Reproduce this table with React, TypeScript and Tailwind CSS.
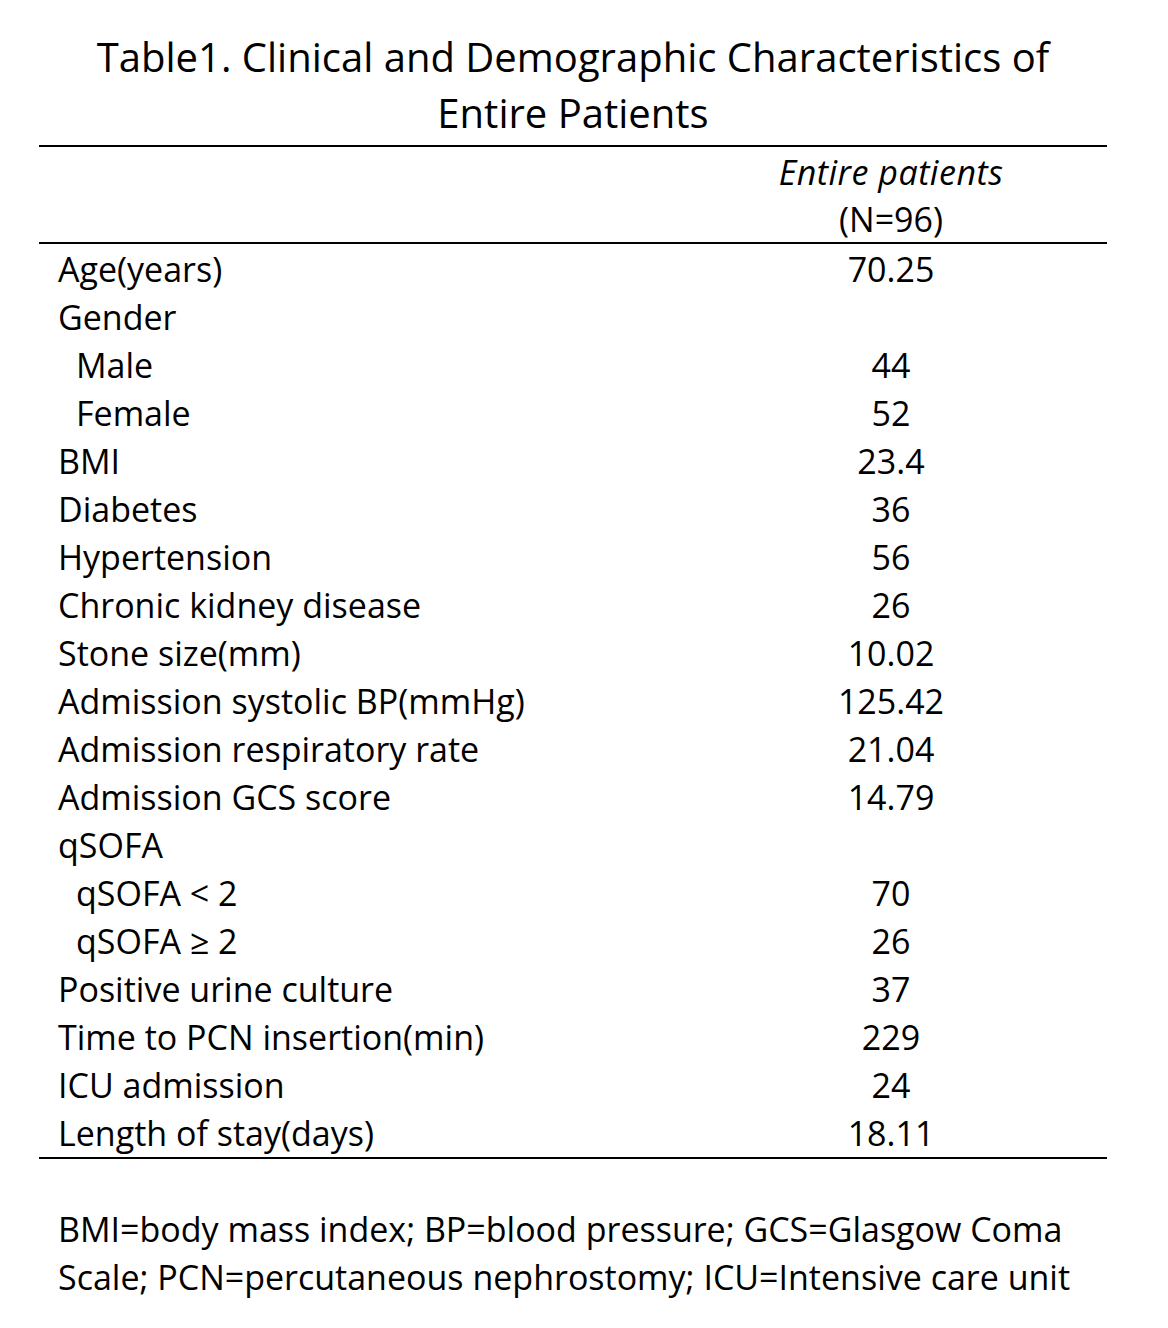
const rows: { label: string; value: string; indent?: boolean }[] = [
  { label: "Age(years)", value: "70.25" },
  { label: "Gender", value: "" },
  { label: "Male", value: "44", indent: true },
  { label: "Female", value: "52", indent: true },
  { label: "BMI", value: "23.4" },
  { label: "Diabetes", value: "36" },
  { label: "Hypertension", value: "56" },
  { label: "Chronic kidney disease", value: "26" },
  { label: "Stone size(mm)", value: "10.02" },
  { label: "Admission systolic BP(mmHg)", value: "125.42" },
  { label: "Admission respiratory rate", value: "21.04" },
  { label: "Admission GCS score", value: "14.79" },
  { label: "qSOFA", value: "" },
  { label: "qSOFA < 2", value: "70", indent: true },
  { label: "qSOFA \u2265 2", value: "26", indent: true },
  { label: "Positive urine culture", value: "37" },
  { label: "Time to PCN insertion(min)", value: "229" },
  { label: "ICU admission", value: "24" },
  { label: "Length of stay(days)", value: "18.11" },
];

export default function App() {
  return (
    <div className="min-h-[1328px] w-[1168px] bg-white text-black [font-family:'Open_Sans',Lato,sans-serif]">
      <div className="pt-[29px] pl-[39px] w-[1107px]">
        {/* title */}
        <div className="text-center text-[40px] leading-[56px]">
          <div>Table1. Clinical and Demographic Characteristics of</div>
          <div>Entire Patients</div>
        </div>

        <div className="w-[1068px] mt-[4px]">
          <div className="border-t-2 border-black" />
          <div className="flex h-[95px]">
            <div className="w-[636px]" />
            <div className="flex-1 flex flex-col items-center pt-[2px] text-[34px] leading-[47px]">
              <div className="italic tracking-[0.5px]">Entire patients</div>
              <div>(N=96)</div>
            </div>
          </div>
          <div className="border-t-2 border-black" />

          <div className="pt-[1px]">
            {rows.map((r) => (
              <div key={r.label} className="flex h-[48px] items-center text-[34px]">
                <div className={`w-[636px] ${r.indent ? "pl-[37px]" : "pl-[19px]"}`}>{r.label}</div>
                <div className="flex-1 text-center">{r.value}</div>
              </div>
            ))}
          </div>
          <div className="border-t-2 border-black" />
        </div>

        <div className="pl-[19px] pt-[46px] text-[34px] leading-[48px]">
          <div>BMI=body mass index; BP=blood pressure; GCS=Glasgow Coma</div>
          <div>Scale; PCN=percutaneous nephrostomy; ICU=Intensive care unit</div>
        </div>
      </div>
    </div>
  );
}
